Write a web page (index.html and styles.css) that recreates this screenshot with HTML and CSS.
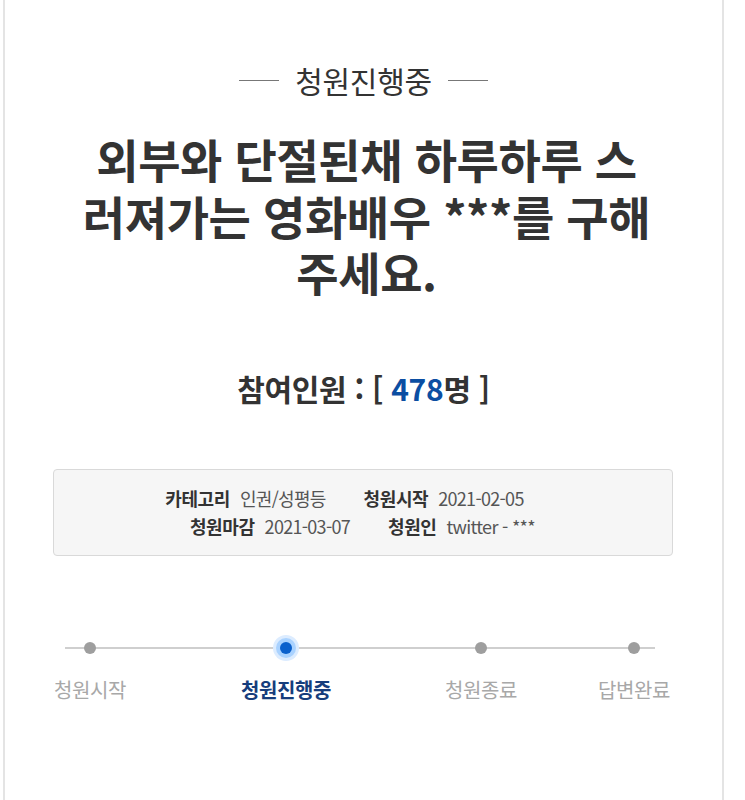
FILE: index.html
```html
<!DOCTYPE html>
<html lang="ko">
<head>
<meta charset="utf-8">
<title>청원진행중</title>
<link rel="stylesheet" href="styles.css">
</head>
<body>
<div class="page">
  <div class="status"><span class="dash"></span><span class="status-text">청원진행중</span><span class="dash"></span></div>
  <h1 class="title">외부와 단절된채 하루하루 스러져가는 영화배우 ***를 구해주세요.</h1>
  <div class="count">참여인원 : [ <span class="num">478</span>명 ]</div>
  <div class="info">
    <div class="info-row first">
      <span class="item"><b>카테고리</b><span class="val">인권/성평등</span></span>
      <span class="item"><b>청원시작</b><span class="val">2021-02-05</span></span>
    </div>
    <div class="info-row">
      <span class="item"><b>청원마감</b><span class="val">2021-03-07</span></span>
      <span class="item"><b>청원인</b><span class="val">twitter - ***</span></span>
    </div>
  </div>
  <div class="steps">
    <div class="step"><span class="dot"></span><span class="label">청원시작</span></div>
    <div class="step active"><span class="dot"></span><span class="label">청원진행중</span></div>
    <div class="step"><span class="dot"></span><span class="label">청원종료</span></div>
    <div class="step"><span class="dot"></span><span class="label">답변완료</span></div>
  </div>
</div>
</body>
</html>
```
FILE: styles.css
```css
html, body {
  margin: 0;
  padding: 0;
  background: #fff;
}
body {
  font-family: "Noto Sans CJK KR", "Noto Sans", sans-serif;
  color: #333;
}
.page {
  margin-left: 3px;
  width: 721px;
  height: 800px;
  box-sizing: border-box;
  border-left: 2px solid #e4e4e4;
  border-right: 2px solid #e4e4e4;
  display: flex;
  flex-direction: column;
  align-items: center;
  padding-top: 60px;
}
.status {
  display: flex;
  align-items: center;
  gap: 16px;
  height: 40px;
}
.dash {
  width: 40px;
  height: 1px;
  background: #777;
}
.status-text {
  font-size: 30px;
  line-height: 40px;
  color: #333;
  letter-spacing: -0.3px;
}
.title {
  margin: 30px 0 0;
  width: 572px;
  padding-left: 6px;
  text-align: center;
  font-size: 46px;
  line-height: 56.5px;
  font-weight: 700;
  color: #333;
  word-break: break-all;
  letter-spacing: -0.4px;
}
.count {
  margin-top: 68px;
  font-size: 30px;
  line-height: 40px;
  font-weight: 700;
  color: #333;
  letter-spacing: -0.3px;
}
.num {
  color: #0b4ea2;
}
.info {
  margin-top: 59px;
  width: 620px;
  height: 87px;
  box-sizing: border-box;
  border: 1px solid #d9d9d9;
  border-radius: 4px;
  background: #f6f6f6;
  display: flex;
  flex-direction: column;
  justify-content: center;
  align-items: center;
  gap: 2px;
  transform: translate(-1px, 2px);
}
.info-row {
  display: flex;
  gap: 38px;
  line-height: 26px;
}
.info-row.first {
  gap: 38px;
  padding-right: 36px;
}
.item {
  display: flex;
  gap: 10px;
  align-items: baseline;
}
.item b {
  font-size: 18px;
  font-weight: 700;
  color: #333;
  letter-spacing: -0.4px;
}
.val {
  font-size: 18px;
  color: #555;
  letter-spacing: -0.7px;
}
.steps {
  margin-top: 80px;
  width: 644px;
  align-self: flex-start;
  margin-left: 35px;
  display: grid;
  grid-template-columns: 196px 195px 153px 100px;
  background: linear-gradient(#cfcfcf, #cfcfcf) no-repeat;
  background-size: 590px 2px;
  background-position: 25px 13px;
}
.step {
  width: 100px;
  display: flex;
  flex-direction: column;
  align-items: center;
}
.dot {
  width: 12px;
  height: 12px;
  border-radius: 50%;
  background: #9e9e9e;
  margin-top: 8px;
  margin-bottom: 8px;
}
.step.active .dot {
  background: #0a60cc;
  box-shadow: 0 0 0 4px #a9d2ff, 0 0 0 7px #dcecff;
}
.label {
  margin-top: 14px;
  font-size: 20px;
  line-height: 28px;
  color: #a8a8a8;
  letter-spacing: -0.4px;
}
.step.active .label {
  color: #163d7c;
  font-weight: 700;
}
```
